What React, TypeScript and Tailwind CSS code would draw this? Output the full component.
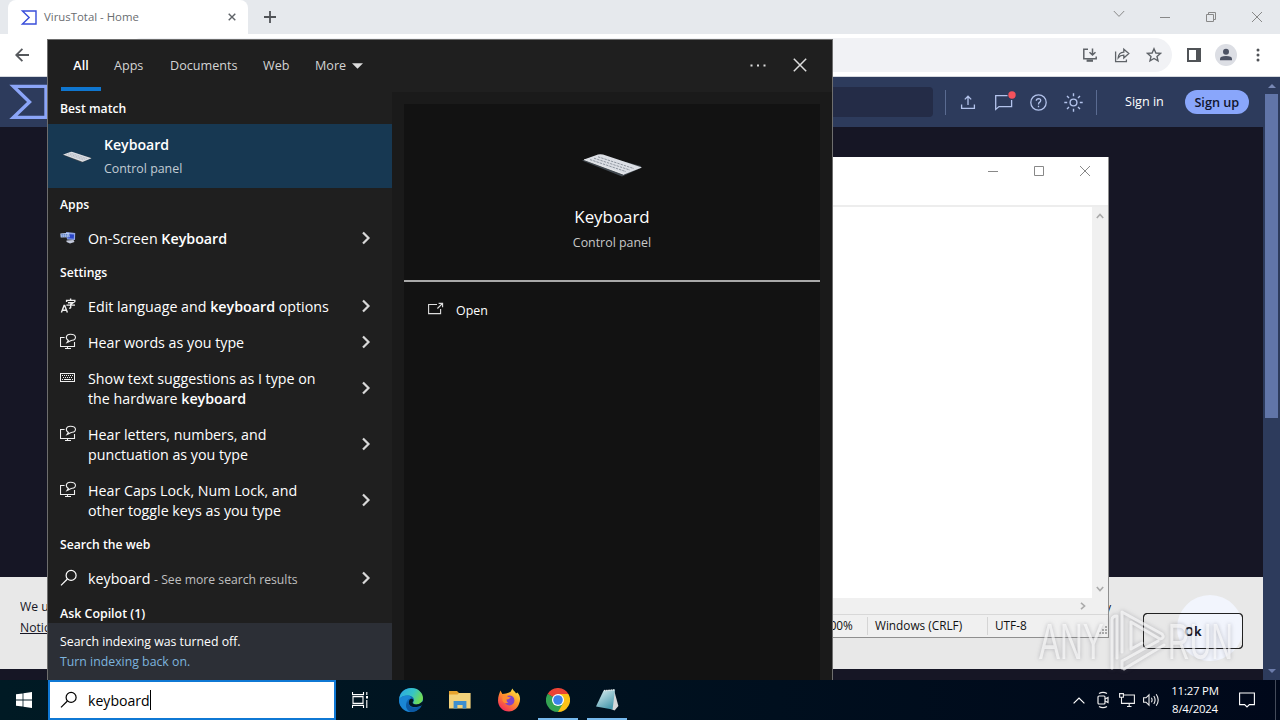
import React from 'react'

type IconProps = { className?: string }

const ChevronRight = () => (
  <svg className="w-3 h-4 shrink-0" viewBox="0 0 12 16" fill="none" stroke="#d8d8d8" strokeWidth="2.2">
    <path d="M3 2.5 L8.5 8 L3 13.5" />
  </svg>
)

const SearchIcon = ({ className }: IconProps) => (
  <svg className={className} viewBox="0 0 18 18" fill="none" stroke="currentColor" strokeWidth="1.2">
    <circle cx="11.1" cy="6.4" r="5" />
    <path d="M7.4 10 L1 16.4" />
  </svg>
)

const NarratorIcon = () => (
  <svg className="w-[18px] h-[18px]" viewBox="0 0 18 18" fill="none" stroke="#eee" strokeWidth="1.1">
    <path d="M4.6 4.5 H.5 V13.5 H14.5 V9" />
    <path d="M5 15.5 H11 M7.5 13.5 V15.5" />
    <path d="M7 9.6 L8.4 7.4 C5.2 5.6 5.6 1.4 10.4 1.2 C16.4 1.1 17.2 6.6 12.2 7.3 C10.2 7.7 8.8 8.8 7 9.6 Z" />
  </svg>
)

const KeyboardIcon = () => (
  <svg className="w-4 h-4" viewBox="0 0 16 16" fill="none" stroke="#eee" strokeWidth="1">
    <rect x="0.5" y="3.5" width="14" height="8" />
    <path d="M2 5.5 H13 M3 7.5 H13" strokeDasharray="1 1" />
    <path d="M2 9.5 H3 M4 9.5 H11 M12 9.5 H13" />
  </svg>
)

const LanguageIcon = () => (
  <svg className="w-4 h-4" viewBox="0 0 16 16" fill="none" stroke="#eee" strokeWidth="1.4">
    <path d="M1.4 14.6 L4.1 7.4 H4.7 L7.4 14.6 M2.4 12.2 H6.4" />
    <path d="M6.6 4 V2.4 H14.8 V4 M10.6 2.4 V0.6 M8 4.8 H13 L10.7 6.3 V9.4 Q10.7 10.4 9 10.1 M6.4 7.1 H15" />
  </svg>
)

const OnScreenKeyboardIcon = () => (
  <svg className="w-4 h-4" viewBox="0 0 16 16">
    <path d="M6 2 L15.2 3 L15 10 L7 9.5 Z" fill="#8fa5e8" />
    <path d="M7 4 L14 4.6 L13.8 8.7 L7.4 8.2 Z" fill="#2a45c8" />
    <path d="M6.5 10.4 L13.5 10 L14.5 12 L10 13.6 L6.6 12 Z" fill="#c3c9da" />
    <path d="M0.3 3.4 L9 2.8 L9.8 7.2 L0.7 7.4 Z" fill="#b9cdf4" />
    <path d="M1.4 4.7 H8.3 M1.6 6.1 H8.8" stroke="#365ca8" strokeWidth="0.8" strokeDasharray="1.5 0.6" />
  </svg>
)

const KeyboardPicture = ({ className }: IconProps) => (
  <svg className={className} viewBox="0 0 62 24">
    <path d="M1 7.5 L41 23.4 L60 15 L60 13 L18 2 Z" fill="#41484f" />
    <path d="M3 6.6 L17 1.6 Q19 1 22 1.6 L61 14.4 L43 21.6 Z" fill="#dcdfe5" />
    <path d="M9 6.6 L45 18.6 M13 5.2 L49 17.1 M17 3.8 L53 15.6" stroke="#858c96" strokeWidth="0.9" strokeDasharray="2.4 1" />
    <path d="M3 6.6 L43 21.4" stroke="#fafafa" strokeWidth="0.8" />
  </svg>
)

const VirusTotalLogo = ({ className }: IconProps) => (
  <svg className={className} viewBox="0 0 40 36" fill="none" stroke="currentColor" strokeWidth="3.4">
    <path d="M5.5 2.4 H38 V33.4 H5.5 L21.5 18 Z" />
  </svg>
)

const WindowButtons = ({ restored }: { restored?: boolean }) => (
  <div className="flex items-center text-[#888]">
    <svg className="w-[46px] h-[30px]" viewBox="0 0 46 30" fill="none" stroke="currentColor">
      <path d="M18 15.5 H28" />
    </svg>
    <svg className="w-[46px] h-[30px]" viewBox="0 0 46 30" fill="none" stroke="currentColor">
      {restored ? (
        <path d="M18.5 12.5 H25.5 V19.5 H18.5 Z M20.5 12.5 V10.5 H27.5 V17.5 H25.5" />
      ) : (
        <path d="M18.5 10.5 H27.5 V19.5 H18.5 Z" />
      )}
    </svg>
    <svg className="w-[46px] h-[30px]" viewBox="0 0 46 30" fill="none" stroke="currentColor">
      <path d="M18 10 L28 20 M28 10 L18 20" />
    </svg>
  </div>
)

const TabStrip = () => (
  <div className="flex h-[34px] bg-[#e6e9ed]">
    <div className="flex items-center w-[240px] ml-2 px-3 bg-white rounded-t-lg">
      <VirusTotalLogo className="w-[17px] h-[15px] text-[#394eda]" />
      <span className="ml-[7px] text-[11.4px] text-[#6a6d71]">VirusTotal - Home</span>
      <svg className="w-2 h-2 ml-auto" viewBox="0 0 9 9" stroke="#5f6368" strokeWidth="1.6">
        <path d="M.8 .8 L8.2 8.2 M8.2 .8 L.8 8.2" />
      </svg>
    </div>
    <svg className="w-3 h-3 mt-[11px] ml-4" viewBox="0 0 12 12" stroke="#505357" strokeWidth="1.8">
      <path d="M6 0 V12 M0 6 H12" />
    </svg>
    <svg className="w-3 h-2 mt-[10px] ml-auto mr-[17px]" viewBox="0 0 12 8" fill="none" stroke="#888">
      <path d="M.8 1 L6 6.4 L11.2 1" />
    </svg>
    <WindowButtons restored />
  </div>
)

const Toolbar = () => (
  <div className="flex items-center h-[43px] bg-white border-b border-[#d5d8de]">
    <svg className="w-[14px] h-[14px] ml-[15px]" viewBox="0 0 14 14" fill="none" stroke="#55585c" strokeWidth="1.8">
      <path d="M14 7 H1.5 M7.4 .8 L1.2 7 L7.4 13.2" />
    </svg>
    <div className="flex items-center justify-end gap-4 flex-1 h-[34px] ml-24 pr-[10px] bg-[#f1f2f5] rounded-full text-[#5f6368]">
      <svg className="w-4 h-4" viewBox="0 0 16 16" fill="none" stroke="currentColor" strokeWidth="1.5">
        <path d="M6 2.2 H1.8 V11.8 H14.2 V9.4 M10.5 1.4 V7.6 M7.5 5.2 L10.5 8 L13.5 5.2" />
        <path d="M4.6 13.6 H11" strokeWidth="2.4" />
      </svg>
      <svg className="w-4 h-4" viewBox="0 0 16 16" fill="none" stroke="currentColor" strokeWidth="1.3">
        <path d="M1.6 4.6 V14.6 H12.4 V12.4 M4.2 10.8 Q4.6 5.3 9.8 5.1 V2.2 L14.8 6.6 L9.8 11 V8.2 Q6.2 8.2 4.2 10.8 Z" />
      </svg>
      <svg className="w-4 h-4" viewBox="0 0 16 16" fill="none" stroke="currentColor" strokeWidth="1.4">
        <path d="M8 1.8 L9.9 6 L14.4 6.4 L11 9.4 L12 13.9 L8 11.5 L4 13.9 L5 9.4 L1.6 6.4 L6.1 6 Z" />
      </svg>
    </div>
    <svg className="w-[14px] h-[14px] ml-[15px]" viewBox="0 0 14 14" fill="none">
      <rect x="1" y="1" width="12" height="12" stroke="#505357" strokeWidth="2" />
      <rect x="9" y="1" width="4" height="12" fill="#505357" />
    </svg>
    <svg className="w-[22px] h-[22px] ml-[14px]" viewBox="0 0 22 22">
      <circle cx="11" cy="11" r="11" fill="#dcdee4" />
      <circle cx="11" cy="7.8" r="3" fill="#4c5263" />
      <path d="M5 16.2 V14.8 Q5 12 11 12 Q17 12 17 14.8 V16.2 Z" fill="#4c5263" />
    </svg>
    <svg className="w-1 h-[14px] ml-[19px] mr-5" viewBox="0 0 4 14" fill="#505357">
      <circle cx="2" cy="2" r="1.5" />
      <circle cx="2" cy="7" r="1.5" />
      <circle cx="2" cy="12" r="1.5" />
    </svg>
  </div>
)

const SiteHeader = () => (
  <div className="flex items-center h-[50px] bg-[#2d3b5c] text-[#b3c3ec]">
    <VirusTotalLogo className="w-10 h-9 ml-2 text-[#8ba5f8]" />
    <div className="w-[533px] h-[30px] ml-[352px] bg-[#242c47] rounded" />
    <div className="w-px h-[25px] ml-3 bg-[#5a6b91]" />
    <svg className="w-4 h-4 ml-[14px]" viewBox="0 0 16 16" fill="none" stroke="currentColor" strokeWidth="1.3">
      <path d="M1.6 10.4 V14.4 H14.4 V10.4 M8 11 V2.4 M4.8 5.4 L8 2.2 L11.2 5.4" />
    </svg>
    <svg className="w-[23px] h-[22px] ml-[18px]" viewBox="0 0 23 22" fill="none" stroke="currentColor" strokeWidth="1.3">
      <path d="M13.5 4.6 H1.7 V18.4 L5 15.6 H17.6 V9" />
      <circle cx="18" cy="4" r="3.7" fill="#f4525c" stroke="none" />
    </svg>
    <svg className="w-[17px] h-[17px] ml-[13px]" viewBox="0 0 17 17" fill="none" stroke="currentColor" strokeWidth="1.3">
      <circle cx="8.5" cy="8.5" r="7.7" />
      <path d="M6.3 6.8 Q6.4 4.6 8.6 4.6 Q10.8 4.7 10.7 6.6 Q10.5 7.6 9.4 8.4 Q8.5 9 8.5 10.4 M8.5 11.7 V13.2" />
    </svg>
    <svg className="w-[19px] h-[19px] ml-[17px]" viewBox="0 0 19 19" fill="none" stroke="currentColor" strokeWidth="1.4">
      <circle cx="9.5" cy="9.5" r="3.4" />
      <path d="M9.5 .3 V3.2 M9.5 15.8 V18.7 M.3 9.5 H3.2 M15.8 9.5 H18.7 M3 3 L5 5 M14 14 L16 16 M16 3 L14 5 M5 14 L3 16" />
    </svg>
    <div className="w-px h-[25px] ml-[13px] bg-[#5a6b91]" />
    <span className="pt-px ml-7 text-[12.6px] text-white">Sign in</span>
    <span className="flex items-center justify-center w-16 h-6 pt-px ml-[21px] bg-[#89a6fb] rounded-full text-[12.7px] font-semibold text-[#11152c]">Sign up</span>
  </div>
)

const CookieBanner = () => (
  <div className="flex items-center h-[92px] px-5 bg-[#e8e8e8] text-[12.2px] leading-[21px] text-[#161625]">
    <div className="w-[27px] -mt-3 overflow-hidden whitespace-nowrap">
      <p>We u</p>
      <p className="underline">Notic</p>
    </div>
    <div className="flex justify-end w-[1064px] -mt-8">y</div>
    <div className="relative flex items-center justify-center w-[100px] h-9 ml-8 mt-4 border border-[#222] rounded shrink-0">
      <div className="absolute left-[33px] -top-[19px] w-[66px] h-[66px] bg-[#f2f5fd] rounded-full" />
      <div className="absolute -inset-px border border-[#222] rounded" />
      <span className="relative font-bold">Ok</span>
    </div>
  </div>
)

const Browser = () => (
  <div className="flex flex-col h-[680px] bg-[#161625]">
    <TabStrip />
    <Toolbar />
    <div className="flex flex-1">
      <div className="flex flex-col w-[1263px]">
        <SiteHeader />
        <div className="flex-1" />
        <CookieBanner />
        <div className="h-[11px]" />
      </div>
      <div className="flex flex-col items-center w-[17px] pt-[7px] pb-[7px] bg-[#2d3b5c]">
        <svg className="w-2 h-1" viewBox="0 0 8 4" fill="#7888b4">
          <path d="M4 0 L8 4 H0 Z" />
        </svg>
        <div className="w-[13px] h-[324px] mt-[6px] bg-[#6175a8]" />
        <svg className="w-2 h-1 mt-auto" viewBox="0 0 8 4" fill="#6c7cab">
          <path d="M4 4 L8 0 H0 Z" />
        </svg>
      </div>
    </div>
  </div>
)

const Notepad = () => (
  <div className="absolute left-[400px] top-[157px] flex flex-col w-[709px] h-[481px] bg-white border-r border-b border-[#8f8f8f] text-[11.8px] text-[#111]">
    <div className="flex justify-end h-[30px]">
      <div className="-mt-px">
        <WindowButtons />
      </div>
    </div>
    <div className="h-[19px] border-b-2 border-[#ededed] box-content -mt-px" />
    <div className="flex flex-1">
      <div className="flex-1" />
      <div className="flex flex-col items-center justify-between w-4 py-[6px] bg-[#f0f0f0]">
        <svg className="w-2 h-[6px]" viewBox="0 0 8 6" fill="none" stroke="#aaa" strokeWidth="1.6">
          <path d="M.8 5 L4 1.4 L7.2 5" />
        </svg>
        <svg className="w-2 h-[6px]" viewBox="0 0 8 6" fill="none" stroke="#aaa" strokeWidth="1.6">
          <path d="M.8 1 L4 4.6 L7.2 1" />
        </svg>
      </div>
    </div>
    <div className="flex items-center justify-end h-4 pr-[22px] bg-[#f0f0f0]">
      <svg className="w-[6px] h-2" viewBox="0 0 6 8" fill="none" stroke="#aaa" strokeWidth="1.6">
        <path d="M1 .8 L4.6 4 L1 7.2" />
      </svg>
    </div>
    <div className="flex items-center h-[23px] bg-[#f0f0f0] border-t border-[#d8d8d8]">
      <span className="ml-[423px] w-11 tracking-[-0.1px]">100%</span>
      <span className="w-[120px] h-[18px] pl-[7px] border-l border-[#d5d5d5]">Windows (CRLF)</span>
      <span className="h-[18px] pl-[7px] border-l border-[#d5d5d5]">UTF-8</span>
      <svg className="w-[10px] h-[10px] ml-auto mt-2" viewBox="0 0 10 10" fill="#aaa">
        <path d="M7 1h2v2h-2z M4 4h2v2h-2z M7 4h2v2h-2z M1 7h2v2h-2z M4 7h2v2h-2z M7 7h2v2h-2z" />
      </svg>
    </div>
  </div>
)

const Watermark = () => (
  <svg className="absolute left-[1030px] top-[600px] w-[220px] h-[76px] drop-shadow-[0_0_2px_rgba(90,90,100,0.55)]" viewBox="0 0 220 76">
    <g fill="#fff" fillOpacity="0.65" fontFamily="Liberation Sans" fontSize="50">
      <text transform="translate(9 59) scale(.63 1)">ANY</text>
      <text transform="translate(138 59) scale(.6 1)">RUN</text>
    </g>
    <g fill="none" stroke="#fff" strokeOpacity="0.65" strokeWidth="3" strokeLinejoin="round" strokeLinecap="round">
      <path d="M82 68 V20 Q82 16 87 16 V58" />
      <path d="M92 52 V12 L132 34 Q135 38 130 39 L101 22 V49 L112 43" />
      <path d="M92 61 L128 41 M94 69 L134 45 M92 61 V68" />
    </g>
  </svg>
)

type ResultProps = { icon: React.ReactNode; tall?: boolean; children: React.ReactNode }

const Result = ({ icon, tall, children }: ResultProps) => (
  <div className={`flex shrink-0 items-center pl-3 pr-5 ${tall ? 'h-14' : 'h-9'}`}>
    <div className={`flex items-center w-7 shrink-0 ${tall ? 'self-start mt-2 h-5' : ''}`}>{icon}</div>
    <div className="flex-1 pt-[2px] text-[14.25px] leading-5 whitespace-nowrap">{children}</div>
    <ChevronRight />
  </div>
)

const GroupTitle = ({ children }: { children: React.ReactNode }) => (
  <div className="flex shrink-0 items-center h-8 pt-[2px] pl-3 text-[12.2px] font-semibold">{children}</div>
)

const SearchPanel = () => (
  <div className="absolute left-[47px] top-[39px] flex flex-col w-[786px] h-[641px] bg-[#1f1f1f] border-t border-x border-[#6e6e6e] text-white">
    <div className="flex shrink-0 h-[52px] pl-[13px] text-[12.6px] text-[#d4d4d4]">
      <div className="flex flex-col items-center w-10 font-semibold text-white">
        <span className="pt-4 leading-[19px]">All</span>
        <div className="w-10 h-1 mt-auto mb-px bg-[#0f76cf]" />
      </div>
      <span className="w-14 pt-4 leading-[19px] ml-[13px]">Apps</span>
      <span className="w-[93px] pt-4 leading-[19px]">Documents</span>
      <span className="w-[52px] pt-4 leading-[19px]">Web</span>
      <span className="pt-4 leading-[19px]">More</span>
      <svg className="w-[11px] h-[6px] mt-[23px] ml-[6px]" viewBox="0 0 10 5" fill="#ddd">
        <path d="M0 0 H10 L5 5 Z" />
      </svg>
      <svg className="w-4 h-[3px] mt-6 ml-auto" viewBox="0 0 16 3" fill="#ddd">
        <path d="M.5 .5h2v2h-2z M7 .5h2v2h-2z M13.5 .5h2v2h-2z" />
      </svg>
      <svg className="w-[14px] h-[14px] mt-[18px] ml-[27px] mr-[25px]" viewBox="0 0 14 14" stroke="#ddd" strokeWidth="1.5">
        <path d="M.8 .8 L13.2 13.2 M13.2 .8 L.8 13.2" />
      </svg>
    </div>
    <div className="flex flex-1 min-h-0">
      <div className="flex flex-col w-[344px]">
        <GroupTitle>Best match</GroupTitle>
        <div className="flex shrink-0 items-center h-16 pl-[14px] bg-[#173852]">
          <KeyboardPicture className="w-[30px] h-[12px] mr-3 mt-[2px]" />
          <div>
            <p className="text-[14.1px] leading-6 font-semibold">Keyboard</p>
            <p className="pt-px text-[12.4px] leading-[22px] text-[#c3ccd4]">Control panel</p>
          </div>
        </div>
        <GroupTitle>Apps</GroupTitle>
        <Result icon={<OnScreenKeyboardIcon />}>
          On-Screen <b className="font-semibold">Keyboard</b>
        </Result>
        <GroupTitle>Settings</GroupTitle>
        <Result icon={<LanguageIcon />}>
          Edit language and <b className="font-semibold">keyboard</b> options
        </Result>
        <Result icon={<NarratorIcon />}>Hear words as you type</Result>
        <Result icon={<KeyboardIcon />} tall>
          Show text suggestions as I type on
          <br />
          the hardware <b className="font-semibold">keyboard</b>
        </Result>
        <Result icon={<NarratorIcon />} tall>
          Hear letters, numbers, and
          <br />
          punctuation as you type
        </Result>
        <Result icon={<NarratorIcon />} tall>
          Hear Caps Lock, Num Lock, and
          <br />
          other toggle keys as you type
        </Result>
        <GroupTitle>Search the web</GroupTitle>
        <Result icon={<SearchIcon className="w-[18px] h-[18px]" />}>
          keyboard <span className="text-[12.2px] text-[#c0c0c0]">- See more search results</span>
        </Result>
        <div className="flex items-center shrink-0 h-[27px] pt-[9px] pl-3 text-[12.4px] font-semibold">Ask Copilot (1)</div>
        <div className="flex-1 pt-[9px] pl-3 bg-[#2c2f36] text-[12.3px] leading-5">
          <p>Search indexing was turned off.</p>
          <p className="text-[#7db4de]">Turn indexing back on.</p>
        </div>
      </div>
      <div className="flex-1 pt-3 px-3 bg-[#1a1a1a]">
        <div className="flex flex-col h-full bg-[#121212]">
          <div className="flex flex-col items-center h-[178px] pt-[49px] border-b-2 border-[#a8a8a8]">
            <KeyboardPicture className="w-[62px] h-6" />
            <p className="mt-7 text-[16.9px] leading-6">Keyboard</p>
            <p className="mt-1 text-[12.4px] leading-5 text-[#c8c8c8]">Control panel</p>
          </div>
          <div className="flex items-center h-14 pl-6 text-[12.4px]">
            <svg className="w-4 h-4 mr-3 -mt-[3px]" viewBox="0 0 16 16" fill="none" stroke="#ddd" strokeWidth="1.1">
              <path d="M9 3.5 H.6 V12.6 H12.6 V8 M10.6 2.4 H14.6 V6.3 M14.4 2.5 L9.4 7.5" />
            </svg>
            <span className="pt-[2px]">Open</span>
          </div>
        </div>
      </div>
    </div>
  </div>
)

const EdgeIcon = () => (
  <svg className="w-6 h-6" viewBox="0 0 24 24">
    <defs>
      <linearGradient id="edgeTop" x1="0" y1="0" x2="1" y2=".4">
        <stop offset="0" stopColor="#2ba4e6" />
        <stop offset=".6" stopColor="#36c5c6" />
        <stop offset="1" stopColor="#6edb58" />
      </linearGradient>
    </defs>
    <circle cx="12" cy="12" r="12" fill="#1168b4" />
    <path d="M.2 11 C1 3.6 6.6 0 12.4 0 C19.4 0 24 5 24 10 C24 14 21 16.4 17.4 16.4 C14.6 16.4 13.4 15.2 14.4 14 C16.6 10 12.6 7.4 8.8 7.4 C4.6 7.4 1.4 9 .2 11 Z" fill="url(#edgeTop)" />
    <path d="M8.8 7.4 C4 7.4 0 9.6 0 12.6 C.4 18.8 5 24 12 24 C8 22 6.8 19 7.2 15.8 C7.4 12 10 10.4 12.2 10.2 C12 8.6 10.6 7.4 8.8 7.4 Z" fill="#1a86d4" />
    <path d="M10.2 12.6 C8.4 17 13 21.6 22.6 17.4 L24.4 18 V13 L20 16 C14 17.4 12.4 14.6 14.4 13 C14.6 10 11 10.2 10.2 12.6 Z" fill="#021722" />
    <path d="M9.6 13.2 C9 19 14 21.8 22.4 17.8 C20 22 16 24 12 24 C6 22 6 15 9.6 13.2 Z" fill="#0c59a4" />
  </svg>
)

const FolderIcon = () => (
  <svg className="w-[22px] h-5" viewBox="0 0 22 20">
    <path d="M0 1 H8 L10 3 H21 V18 H0 Z" fill="#e6a32e" />
    <path d="M0 4.5 H8.5 L10 3 H21.6 V18.5 H0 Z" fill="#f3d27a" />
    <path d="M4.6 18.5 V11 H17.4 V18.5 H13.6 V15 H8.4 V18.5 Z" fill="#3f8fce" />
  </svg>
)

const FirefoxIcon = () => (
  <svg className="w-6 h-6" viewBox="0 0 24 24">
    <defs>
      <linearGradient id="fox" x1=".9" y1="0" x2=".2" y2="1">
        <stop offset="0" stopColor="#fff04a" />
        <stop offset=".45" stopColor="#ff9a28" />
        <stop offset="1" stopColor="#f4245e" />
      </linearGradient>
    </defs>
    <path d="M3.4 2.6 L5.4 6 L9 5.4 L13.4 4 L15.4 .4 C16.6 3 18.4 3.6 19 5.4 L20.4 4.4 C23.4 7.4 23.8 12 22 16 C20 20.8 16.4 23.4 12 23.4 C5.8 23.4 1 18.6 1 12.4 C1 8.4 2.4 5.6 3.4 2.6 Z" fill="url(#fox)" />
    <circle cx="12.4" cy="12.4" r="5" fill="#8043c8" />
    <path d="M5.4 8 Q9 6.6 11.6 9 L14 9.6 Q12 11.4 9.6 11.6 Q9.4 14 11.4 14.6 Q7 16.4 5.4 12.6 Z" fill="#ff8c32" />
  </svg>
)

const ChromeIcon = () => (
  <svg className="w-6 h-6" viewBox="0 0 24 24">
    <path d="M12 12 L1.6 6 A12 12 0 0 1 22.4 6 Z" fill="#ea4335" />
    <path d="M12 12 L22.4 6 A12 12 0 0 1 12 24 Z" fill="#fbc116" />
    <path d="M12 12 V24 A12 12 0 0 1 1.6 6 Z" fill="#34a353" />
    <path d="M12 6 H22.4 L17 15 Z" fill="#fbc116" />
    <path d="M1.6 6 L6.8 15 L12 12 Z M17.2 15 L12 24 L9 17 Z" fill="#34a353" />
    <circle cx="12" cy="12" r="6" fill="#fff" />
    <circle cx="12" cy="12" r="4.8" fill="#3b82ea" />
  </svg>
)

const NotepadIcon = () => (
  <svg className="w-6 h-6" viewBox="0 0 24 24">
    <defs>
      <linearGradient id="pad" x1="0" y1="0" x2=".6" y2="1">
        <stop offset="0" stopColor="#e4f3f4" />
        <stop offset="1" stopColor="#4a9aae" />
      </linearGradient>
    </defs>
    <path d="M19 2 L23.4 18 L19.6 22.4 L16 21 Z" fill="#d6d8d9" />
    <path d="M8.6 2.6 L20 1.6 L17.6 21.6 L1 18.4 Z" fill="url(#pad)" />
    <path d="M9 2.6 L20 1.8" stroke="#eee" strokeWidth="1.4" strokeDasharray="1 .8" />
  </svg>
)

type AppButtonProps = { active?: boolean; children: React.ReactNode }

const AppButton = ({ active, children }: AppButtonProps) => (
  <div className="flex flex-col items-center w-[49px] h-10">
    <div className="flex flex-1 items-center pt-px">{children}</div>
    <div className={`w-10 h-[2px] ${active ? 'bg-[#76b9ed]' : ''}`} />
  </div>
)

const Taskbar = () => (
  <div className="flex h-10 bg-linear-to-r from-[#001a24] to-[#00081a] text-white">
    <div className="flex items-center justify-center w-12">
      <svg className="w-4 h-4" viewBox="0 0 16 16" fill="#fff">
        <path d="M0 2.3 L6.6 1.4 V7.6 H0 Z M7.4 1.3 L16 0 V7.6 H7.4 Z M0 8.4 H6.6 V14.6 L0 13.7 Z M7.4 8.4 H16 V16 L7.4 14.7 Z" />
      </svg>
    </div>
    <div className="flex items-center w-72 pl-[10px] bg-white border-2 border-[#0f78d4] text-[14.1px] text-black">
      <SearchIcon className="w-[18px] h-[18px] mr-[10px]" />
      <span className="pt-px">keyboard</span>
      <div className="w-px h-5 bg-black" />
    </div>
    <div className="flex items-center justify-center w-[48px] mr-[2px]">
      <svg className="w-4 h-4" viewBox="0 0 16 16" fill="none" stroke="#fff" strokeWidth="1.1">
        <path d="M.5 0 V2.6 H11.5 V0 M.5 16 V13.4 H11.5 V16 M1 4.6 H11 V11.4 H1 Z M14.8 0 V3 M14.8 8 V16" />
        <path d="M14 4 H16 V6.6 H14 Z" fill="#fff" stroke="none" />
      </svg>
    </div>
    <AppButton><EdgeIcon /></AppButton>
    <AppButton><FolderIcon /></AppButton>
    <AppButton><FirefoxIcon /></AppButton>
    <AppButton active><ChromeIcon /></AppButton>
    <AppButton active><NotepadIcon /></AppButton>
    <div className="flex items-center ml-auto">
      <svg className="w-3 h-[7px]" viewBox="0 0 12 7" fill="none" stroke="#fff" strokeWidth="1.2">
        <path d="M.6 6.4 L6 1 L11.4 6.4" />
      </svg>
      <svg className="w-[12px] h-[18px] ml-3" viewBox="0 0 12 18" fill="none" stroke="#eee" strokeWidth="1.2">
        <rect x="1" y="5" width="7" height="8" rx="1" />
        <path d="M8 8 L11 6.4 V11.6 L8 10 M2 2.6 Q6 .2 10 2.6 M2 15.4 Q6 17.8 10 15.4" />
      </svg>
      <svg className="w-4 h-4 ml-[10px]" viewBox="0 0 16 16" fill="none" stroke="#eee" strokeWidth="1.1">
        <path d="M4.6 3 H15.4 V11.4 H4 M8 14.5 H12.5 M10.2 11.4 V14.5 M.6 1.6 H4.4 V5.2 H.6 Z M2.5 5.2 V11.4 H4.6" />
      </svg>
      <svg className="w-[17px] h-[14px] ml-2" viewBox="0 0 17 14" fill="none" stroke="#eee" strokeWidth="1.1">
        <path d="M.6 4.8 H3 L6 1.8 V12.2 L3 9.2 H.6 Z M8.4 4.8 Q9.8 7 8.4 9.2 M10.8 3 Q13.4 7 10.8 11 M13.2 1.2 Q17.2 7 13.2 12.8" />
      </svg>
      <div className="w-[48px] ml-[11px] text-center text-[11.4px] leading-[18px] tracking-[-0.2px] whitespace-nowrap">
        <p>11:27 PM</p>
        <p>8/4/2024</p>
      </div>
      <svg className="w-4 h-4 ml-5 mr-5" viewBox="0 0 16 16" fill="none" stroke="#fff" strokeWidth="1.1">
        <path d="M.6 1 H15.4 V12.6 H10.4 L8 15 L5.6 12.6 H.6 Z" />
      </svg>
      <div className="w-px h-10 mr-1 bg-[#444b5a]" />
    </div>
  </div>
)

const App = () => {
  return (
    <div className="relative w-[1280px] h-[720px] overflow-hidden font-['Open_Sans','Noto_Sans',sans-serif]">
      <Browser />
      <Notepad />
      <SearchPanel />
      <Watermark />
      <Taskbar />
    </div>
  )
}

export default App
